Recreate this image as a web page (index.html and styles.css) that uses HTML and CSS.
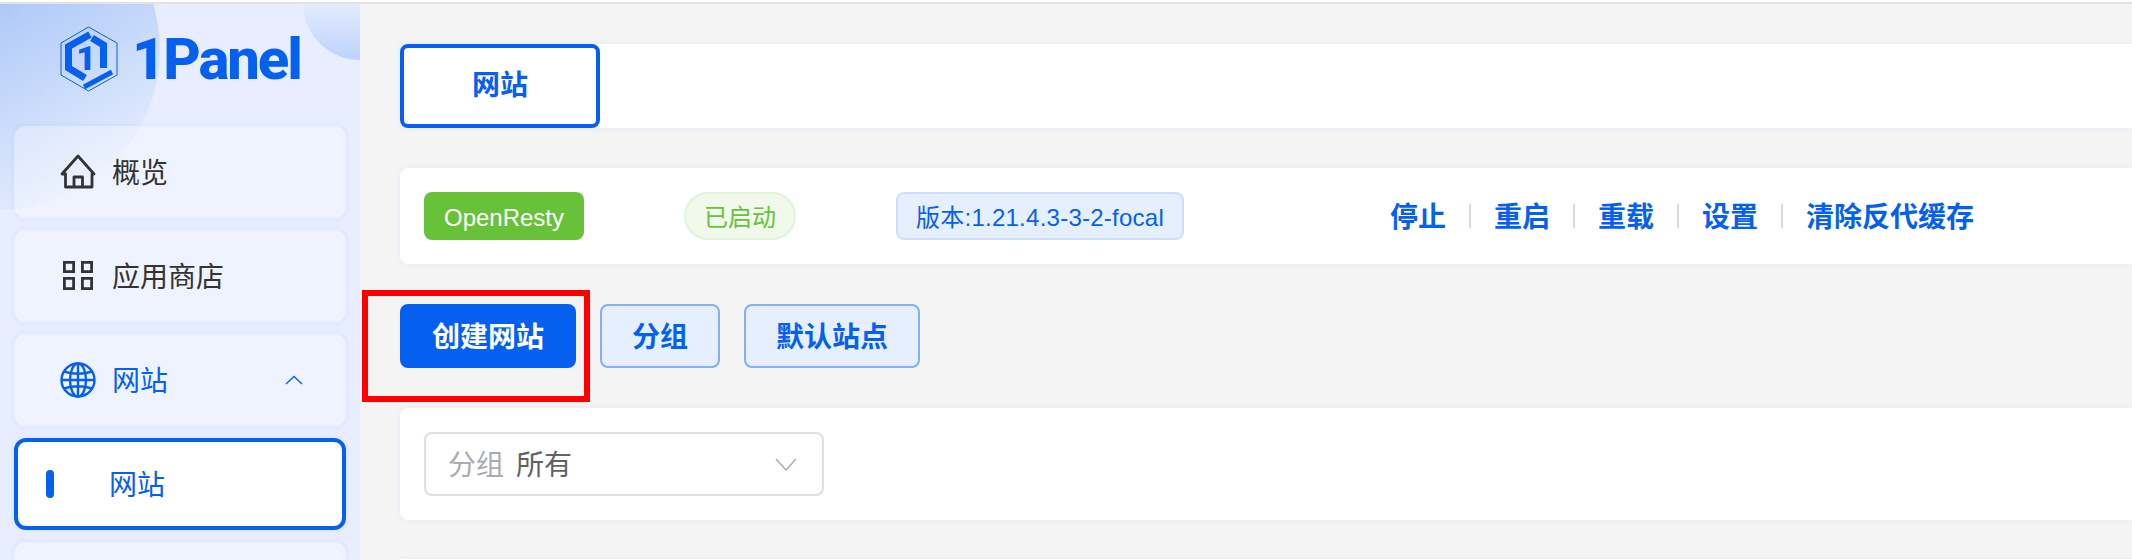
FILE: index.html
```html
<!DOCTYPE html>
<html>
  <head>
    <meta charset="utf-8" />
    <title>1Panel</title>
    <link rel="stylesheet" href="styles.css">
  </head>
  <body>
    <div class="top-line"></div>
    <div id="wrap">
      <aside>
        <span class="blob blob-left"></span>
        <span class="blob blob-right"></span>
        <a class="logo" href="#">
          <svg class="logo-mark" viewBox="0 0 58 66" width="58" height="66">
            <path d="M28.5 1 L57 17 V49 L28.5 65 L1 49 V17 Z" fill="none" stroke="#0560f0" stroke-width="1" />
            <path d="M30 8.5 L8.5 20.5 V42 L25 52" fill="none" stroke="#0560f0" stroke-width="7" />
            <path d="M32 12 L43.5 19 V42" fill="none" stroke="#0560f0" stroke-width="7" />
            <path d="M52 46 L24 61" fill="none" stroke="#0560f0" stroke-width="5" />
            <text x="26" y="44" text-anchor="middle" class="logo-one">1</text>
          </svg>
          <span class="logo-text">1Panel</span>
        </a>
        <ul class="menu">
          <li class="menu-item">
            <svg class="menu-icon" viewBox="0 0 36 36" width="36" height="36">
              <path d="M5.5 20 H2 L18 2 L34 20 H32 V33 H5.5 Z M14 33 V23 H22.5 V33" fill="none" stroke="#333" stroke-width="2.8" stroke-linejoin="round" />
            </svg>
            <span class="menu-text">概览</span>
          </li>
          <li class="menu-item">
            <svg class="menu-icon" viewBox="0 0 36 36" width="36" height="36">
              <path d="M4.4 4.4 H13.6 V13.6 H4.4 Z M22.4 4.4 H31.6 V13.6 H22.4 Z M4.4 20.4 H13.6 V30.6 H4.4 Z M22.4 20.4 H31.6 V30.6 H22.4 Z" fill="none" stroke="#333" stroke-width="2.8" />
            </svg>
            <span class="menu-text">应用商店</span>
          </li>
          <li class="menu-item is-open">
            <svg class="menu-icon" viewBox="0 0 36 36" width="36" height="36">
              <g fill="none" stroke="#0560f0" stroke-width="2.4">
                <circle cx="18" cy="18" r="16.5" />
                <ellipse cx="18" cy="18" rx="8" ry="16.5" />
                <path d="M18 1.5 V34.5 M1.5 18 H34.5 M4 9.5 Q18 14 32 9.5 M4 26.5 Q18 22 32 26.5" />
              </g>
            </svg>
            <span class="menu-text">网站</span>
            <svg class="menu-arrow" viewBox="0 0 18 10" width="18" height="10">
              <path d="M1 9 L9 1.5 L17 9" fill="none" stroke="#0560f0" stroke-width="1.4" />
            </svg>
          </li>
          <li class="menu-item is-active">
            <span class="active-bar"></span>
            <span class="menu-text">网站</span>
          </li>
          <li class="menu-item menu-cut"></li>
        </ul>
      </aside>
      <section>
        <div class="card tabs">
          <a class="tab" href="#">网站</a>
        </div>
        <div class="card status">
          <span class="tag tag-name">OpenResty</span>
          <span class="tag tag-state">已启动</span>
          <span class="tag tag-version">版本:1.21.4.3-3-2-focal</span>
          <div class="links">
            <a href="#">停止</a>
            <i></i>
            <a href="#">重启</a>
            <i></i>
            <a href="#">重载</a>
            <i></i>
            <a href="#">设置</a>
            <i></i>
            <a href="#">清除反代缓存</a>
          </div>
        </div>
        <div class="actions">
          <span class="highlight"></span>
          <button class="btn btn-primary">创建网站</button>
          <button class="btn btn-plain">分组</button>
          <button class="btn btn-plain">默认站点</button>
        </div>
        <div class="card filter">
          <div class="select">
            <span class="select-label">分组</span>
            <span class="select-value">所有</span>
            <svg class="select-arrow" viewBox="0 0 22 13" width="22" height="13">
              <path d="M1 1 L11 12 L21 1" fill="none" stroke="#a8abb2" stroke-width="1.4" />
            </svg>
          </div>
        </div>
        <div class="card rest"></div>
      </section>
    </div>
  </body>
</html>
```
FILE: styles.css
```css
/* Simple Reset CSS */
* {
  margin: 0;
  padding: 0;
  box-sizing: border-box;
}

html,
body {
  height: 560px;
  overflow: hidden;
}

body {
  font-family: 'Liberation Sans', 'Noto Sans CJK SC', sans-serif;
  color: #333;
  background-color: #fff;
}

li {
  list-style: none;
}

a {
  text-decoration: none;
}

.top-line {
  height: 4px;
  border-bottom: 2px solid #e3e3e3;
}

#wrap {
  display: flex;
  height: 556px;
}

/* sidebar */
aside {
  position: relative;
  flex: 0 0 360px;
  padding: 22px 14px 0;
  overflow: hidden;
  background-color: #e8eeff;
}

.blob {
  position: absolute;
  border-radius: 50%;
}

.blob-left {
  top: -114px;
  left: -160px;
  width: 320px;
  height: 320px;
  background: linear-gradient(150deg, #aec9f8 41%, #e6edfe 88%);
}

.blob-right {
  top: -58px;
  right: -57px;
  width: 114px;
  height: 114px;
  background: linear-gradient(to bottom, #e4ecfe 50%, #bfd3fb 98%);
}

.logo {
  position: relative;
  display: flex;
  align-items: center;
  height: 66px;
  padding-left: 46px;
  margin-bottom: 34px;
}

.logo-one {
  font-family: Roboto, sans-serif;
  font-size: 34px;
  font-weight: 900;
  fill: #0560f0;
}

.logo-text {
  margin-left: 14px;
  font-family: Roboto, sans-serif;
  font-size: 58px;
  line-height: 1;
  font-weight: 800;
  letter-spacing: -2.1px;
  color: #0560f0;
}

.menu {
  position: relative;
}

.menu-item {
  display: flex;
  align-items: center;
  gap: 16px;
  height: 92px;
  margin-bottom: 12px;
  padding-left: 46px;
  font-size: 28px;
  border-radius: 12px;
  background-color: rgba(255, 255, 255, 0.3);
  box-shadow: 0 0 6px rgba(5, 96, 240, 0.08);
}

.menu-text {
  padding-bottom: 2px;
}

.menu-arrow {
  margin-left: auto;
  margin-right: 43px;
}

.menu-cut {
  height: 18px;
  margin-bottom: 0;
  border-radius: 12px 12px 0 0;
}

.is-open {
  color: #0560f0;
}

.is-active {
  gap: 55px;
  padding-left: 28px;
  color: #0560f0;
  border: 4px solid #0560f0;
  background-color: #fff;
}

.active-bar {
  width: 8px;
  height: 28px;
  border-radius: 4px;
  background-color: #0560f0;
}

/* content */
section {
  flex: 1;
  min-width: 0;
  padding: 40px 0 0 40px;
  background-color: #f4f4f5;
}

.card {
  border-radius: 8px 0 0 8px;
  background-color: #fff;
  box-shadow: 0 0 6px rgba(5, 96, 240, 0.08);
}

.tabs {
  height: 84px;
}

.tab {
  display: block;
  width: 200px;
  height: 84px;
  line-height: 76px;
  text-align: center;
  font-size: 28px;
  font-weight: 700;
  color: #0560f0;
  border: 4px solid #0560f0;
  border-radius: 8px;
}

.status {
  display: flex;
  align-items: center;
  height: 96px;
  margin-top: 40px;
  padding-left: 24px;
}

.tag {
  height: 48px;
  line-height: 47px;
  font-size: 24px;
  border: 2px solid transparent;
  border-radius: 8px;
}

.tag-name {
  width: 160px;
  text-align: center;
  color: #fff;
  background-color: #67c23a;
}

.tag-state {
  width: 112px;
  margin-left: 100px;
  text-align: center;
  color: #67c23a;
  border-color: #e1f3d8;
  border-radius: 24px;
  background-color: #f0f9eb;
}

.tag-version {
  width: 288px;
  margin-left: 100px;
  text-align: center;
  letter-spacing: 0.25px;
  color: #0560f0;
  border-color: #cddffc;
  background-color: #e6effe;
}

.links {
  display: flex;
  align-items: center;
  margin-left: 206px;
}

.links a {
  padding-bottom: 2px;
  font-size: 28px;
  font-weight: 700;
  color: #0560f0;
}

.links i {
  width: 2px;
  height: 24px;
  margin: 0 23px;
  background-color: #d5dae4;
}

.actions {
  position: relative;
  display: flex;
  gap: 24px;
  height: 64px;
  margin-top: 40px;
}

.highlight {
  position: absolute;
  top: -14px;
  left: -38px;
  width: 228px;
  height: 112px;
  border: 6px solid #f00;
}

.btn {
  height: 64px;
  padding-bottom: 2px;
  font-family: inherit;
  font-size: 28px;
  font-weight: 700;
  border-radius: 8px;
}

.btn-primary {
  width: 176px;
  color: #fff;
  border: 0;
  background-color: #0560f0;
}

.btn-plain {
  padding-left: 30px;
  padding-right: 30px;
  color: #0560f0;
  border: 2px solid #82aff7;
  background-color: #e6effe;
}

.filter {
  height: 112px;
  margin-top: 40px;
  padding: 24px;
}

.select {
  display: flex;
  align-items: center;
  width: 400px;
  height: 64px;
  padding: 0 25px 0 22px;
  font-size: 28px;
  border: 2px solid #dcdfe6;
  border-radius: 8px;
}

.select-label {
  padding-bottom: 2px;
  margin-right: 12px;
  color: #a8abb2;
}

.select-value {
  padding-bottom: 2px;
  color: #606266;
}

.select-arrow {
  margin-left: auto;
}

.rest {
  height: 1px;
  margin-top: 39px;
}
```
